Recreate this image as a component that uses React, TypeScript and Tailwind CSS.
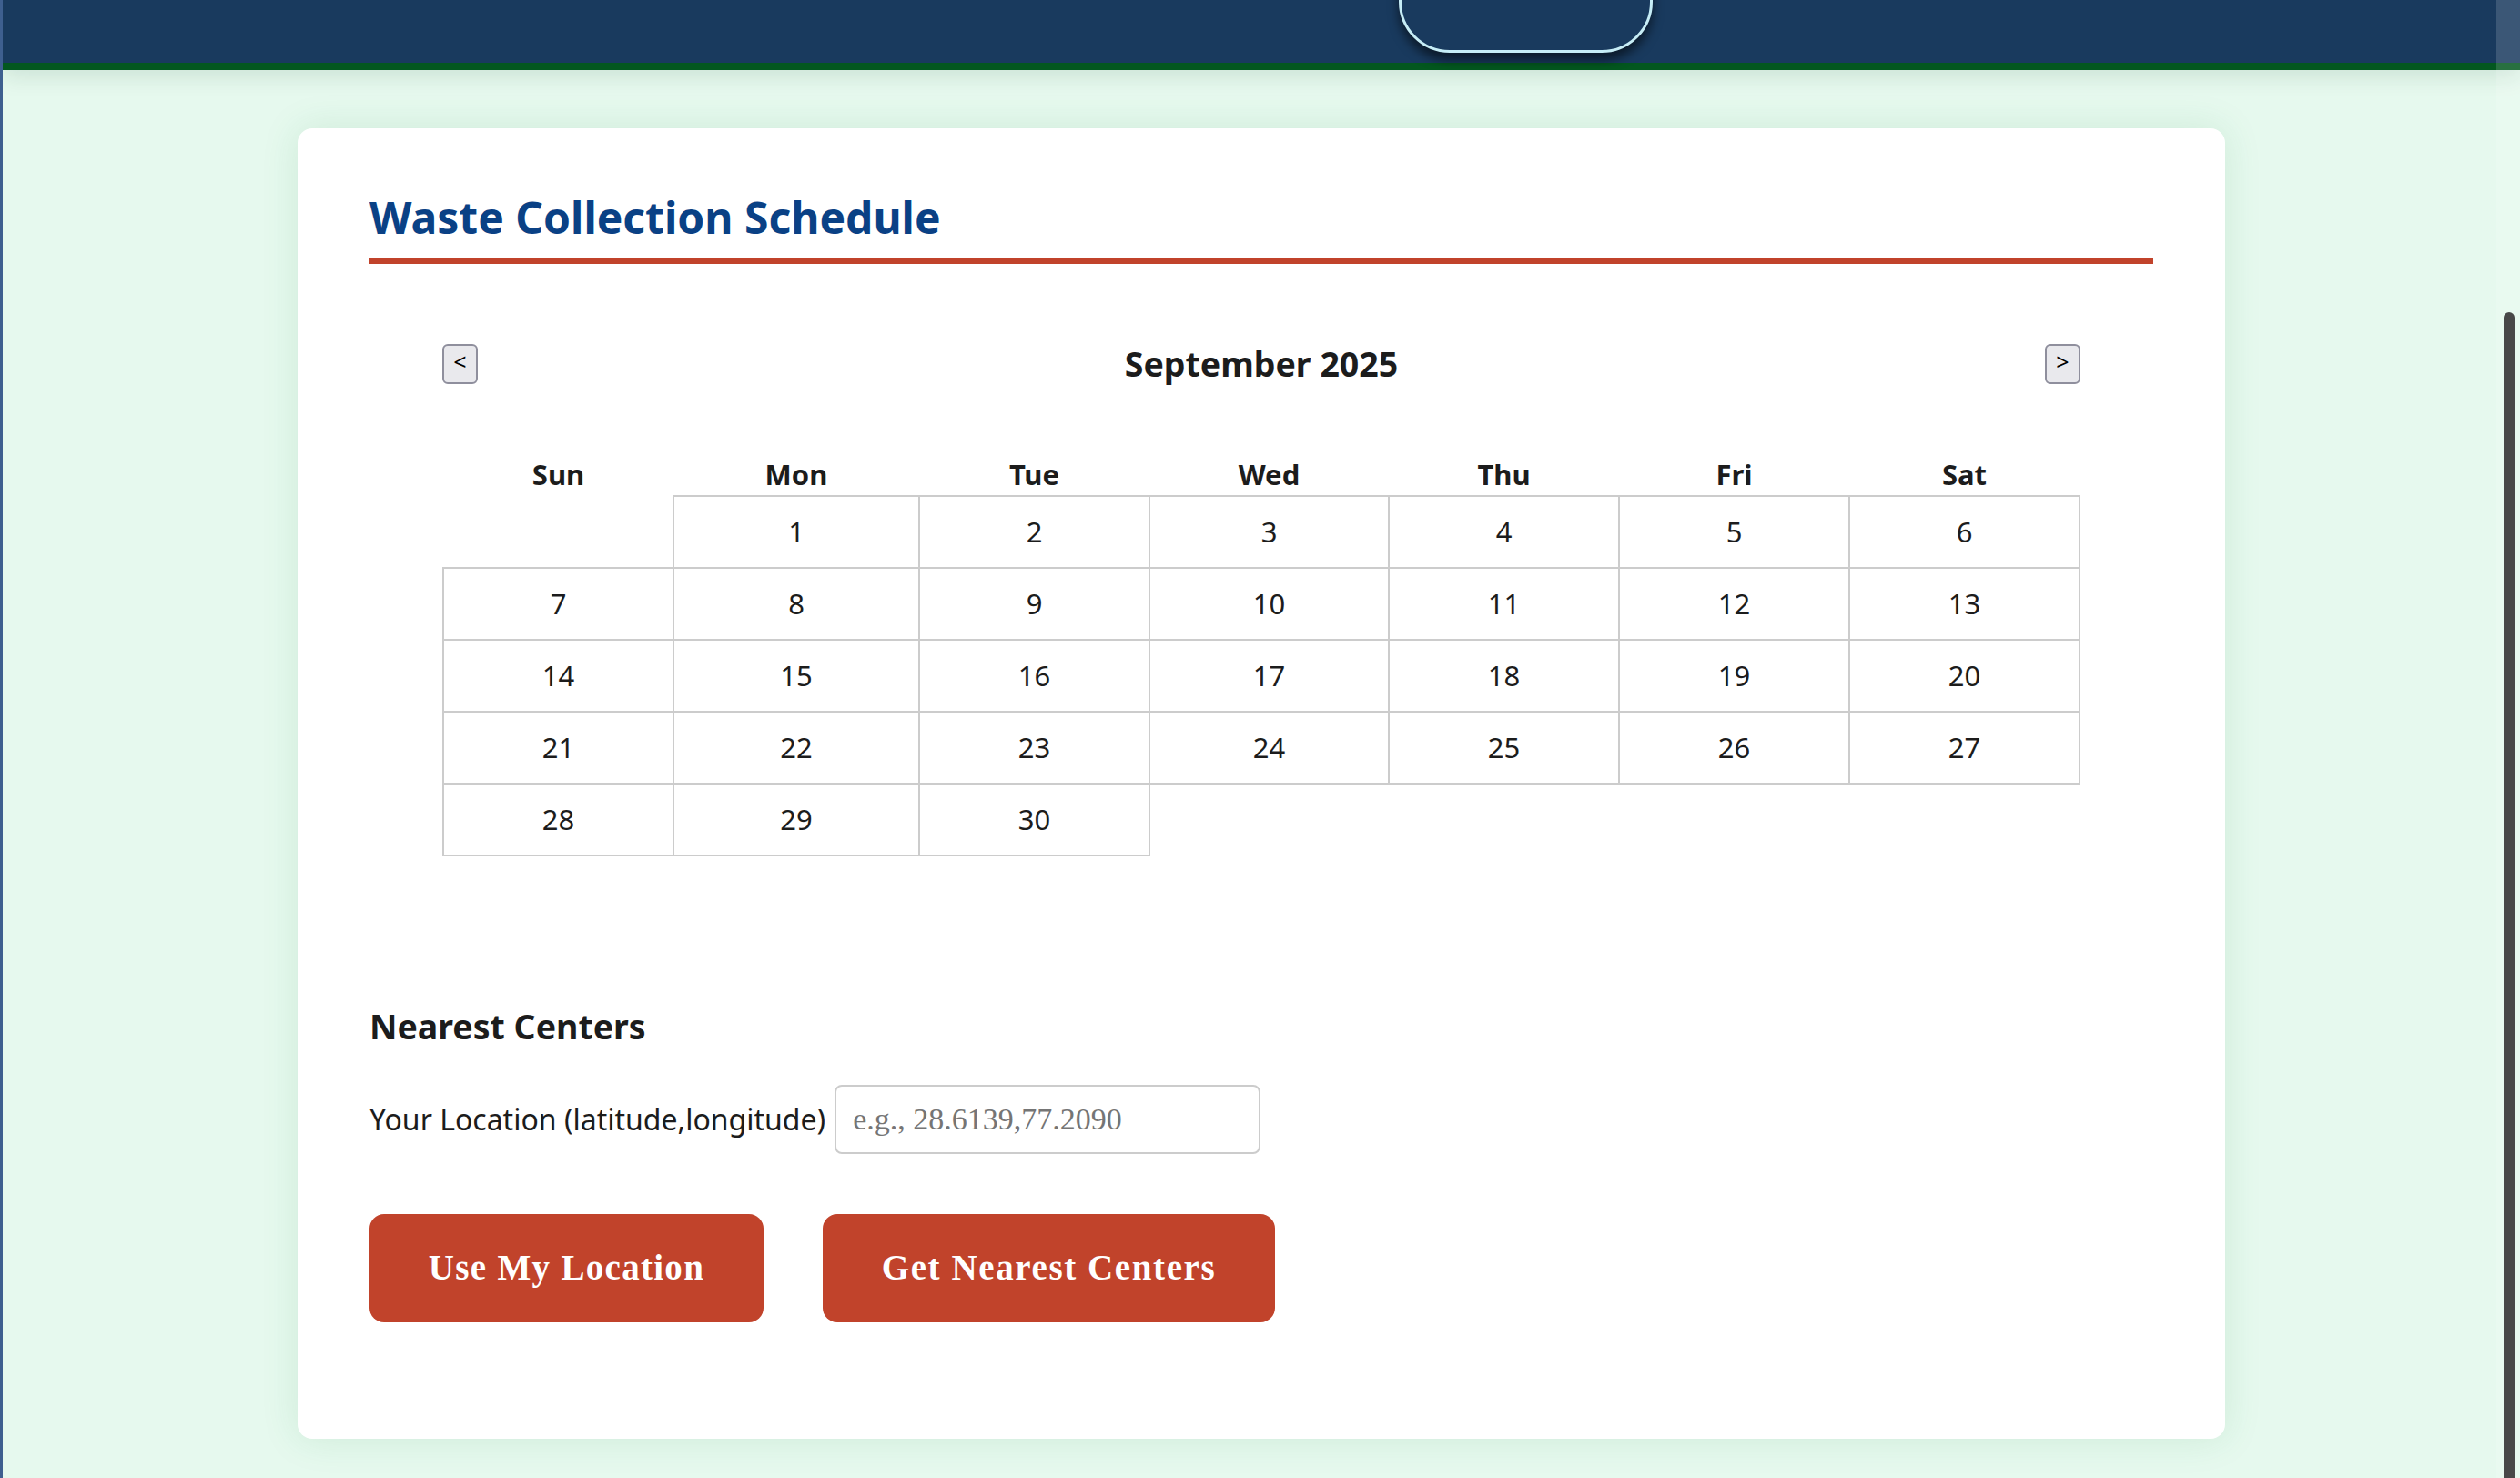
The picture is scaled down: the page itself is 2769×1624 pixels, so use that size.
import React from "react";

const weeks: (number | null)[][] = [
  [null, 1, 2, 3, 4, 5, 6],
  [7, 8, 9, 10, 11, 12, 13],
  [14, 15, 16, 17, 18, 19, 20],
  [21, 22, 23, 24, 25, 26, 27],
  [28, 29, 30, null, null, null, null],
];

const days = ["Sun", "Mon", "Tue", "Wed", "Thu", "Fri", "Sat"];

export default function App() {
  return (
    <div className="relative min-h-screen bg-[#e6f9ee] border-l-[3px] border-[#3e5f8f] font-['Noto_Sans',sans-serif] text-[#1c1c1c] overflow-hidden">
      {/* header */}
      <header className="relative h-[77px] bg-[#193a5e] border-b-[8px] border-[#03571f] shadow-[0_6px_24px_rgba(0,60,30,0.12)] z-10">
        <div className="absolute left-[1534px] top-[-42px] w-[279px] h-[100px] rounded-b-[56px] border-[3px] border-[#c6edf6] bg-[#193a5e] shadow-[0_8px_12px_rgba(0,0,0,0.55)]" />
      </header>

      <main className="pt-[64px] pb-[60px]">
        <div className="mx-auto w-[2118px] bg-white rounded-[16px] shadow-[0_0_40px_rgba(40,140,80,0.13)] px-[79px] pt-[69px] pb-[128px]">
          <h1 className="text-[48px] font-bold leading-[1.2] text-[#0a4185] pb-[16px] border-b-[6px] border-[#c1432b]">
            Waste Collection Schedule
          </h1>

          <div className="mx-[80px] mt-[84px]">
            <div className="flex items-center justify-between">
              <button className="w-[39px] h-[44px] bg-[#e9e9ed] border-2 border-[#8f8f9d] rounded-[6px] text-[25px] leading-none text-black flex items-center justify-center pb-[5px]">
                &lt;
              </button>
              <h2 className="text-[37.5px] font-bold leading-[52px] text-[#1c1c1c]">September 2025</h2>
              <button className="w-[39px] h-[44px] bg-[#e9e9ed] border-2 border-[#8f8f9d] rounded-[6px] text-[25px] leading-none text-black flex items-center justify-center pb-[5px]">
                &gt;
              </button>
            </div>

            <table className="mt-[72px] w-full table-fixed border-collapse">
              <colgroup>
                <col className="w-[253px]" />
                <col className="w-[270px]" />
                <col className="w-[253px]" />
                <col className="w-[263px]" />
                <col className="w-[253px]" />
                <col className="w-[253px]" />
                <col className="w-[253px]" />
              </colgroup>
              <thead>
                <tr>
                  {days.map((d) => (
                    <th key={d} className="p-0 text-[31px] font-bold leading-[46px] text-center">
                      {d}
                    </th>
                  ))}
                </tr>
              </thead>
              <tbody>
                {weeks.map((w, i) => (
                  <tr key={i}>
                    {w.map((d, j) =>
                      d === null ? (
                        <td key={j} className="p-0" />
                      ) : (
                        <td
                          key={j}
                          className="border-2 border-[#cccccc] text-center py-[15px] text-[31px] leading-[47px]"
                        >
                          {d}
                        </td>
                      )
                    )}
                  </tr>
                ))}
              </tbody>
            </table>
          </div>

          <h3 className="mt-[161px] text-[37.5px] font-bold leading-[52px] text-[#1c1c1c]">Nearest Centers</h3>

          <div className="mt-[38px] flex items-center gap-[10px]">
            <label className="text-[32px] leading-[1.5]">Your Location (latitude,longitude)</label>
            <input
              type="text"
              placeholder="e.g., 28.6139,77.2090"
              className="w-[468px] h-[76px] border-2 border-[#cccccc] rounded-[8px] px-[18px] font-['Liberation_Serif',serif] text-[34px] placeholder:text-[#757575] outline-none"
            />
          </div>

          <div className="mt-[66px] flex gap-[65px]">
            <button className="w-[433px] h-[119px] bg-[#c1432b] text-white rounded-[16px] font-['Liberation_Serif',serif] font-bold text-[39px] tracking-[1.3px]">
              Use My Location
            </button>
            <button className="w-[497px] h-[119px] bg-[#c1432b] text-white rounded-[16px] font-['Liberation_Serif',serif] font-bold text-[39px] tracking-[1.6px]">
              Get Nearest Centers
            </button>
          </div>
        </div>
      </main>

      {/* overlay scrollbar */}
      <div className="fixed right-0 top-0 h-full w-[26px] bg-white/15 pointer-events-none z-20" />
      <div className="fixed right-[6px] top-[343px] h-[1400px] w-[12px] rounded-full bg-[#484848] pointer-events-none z-20" />
    </div>
  );
}
